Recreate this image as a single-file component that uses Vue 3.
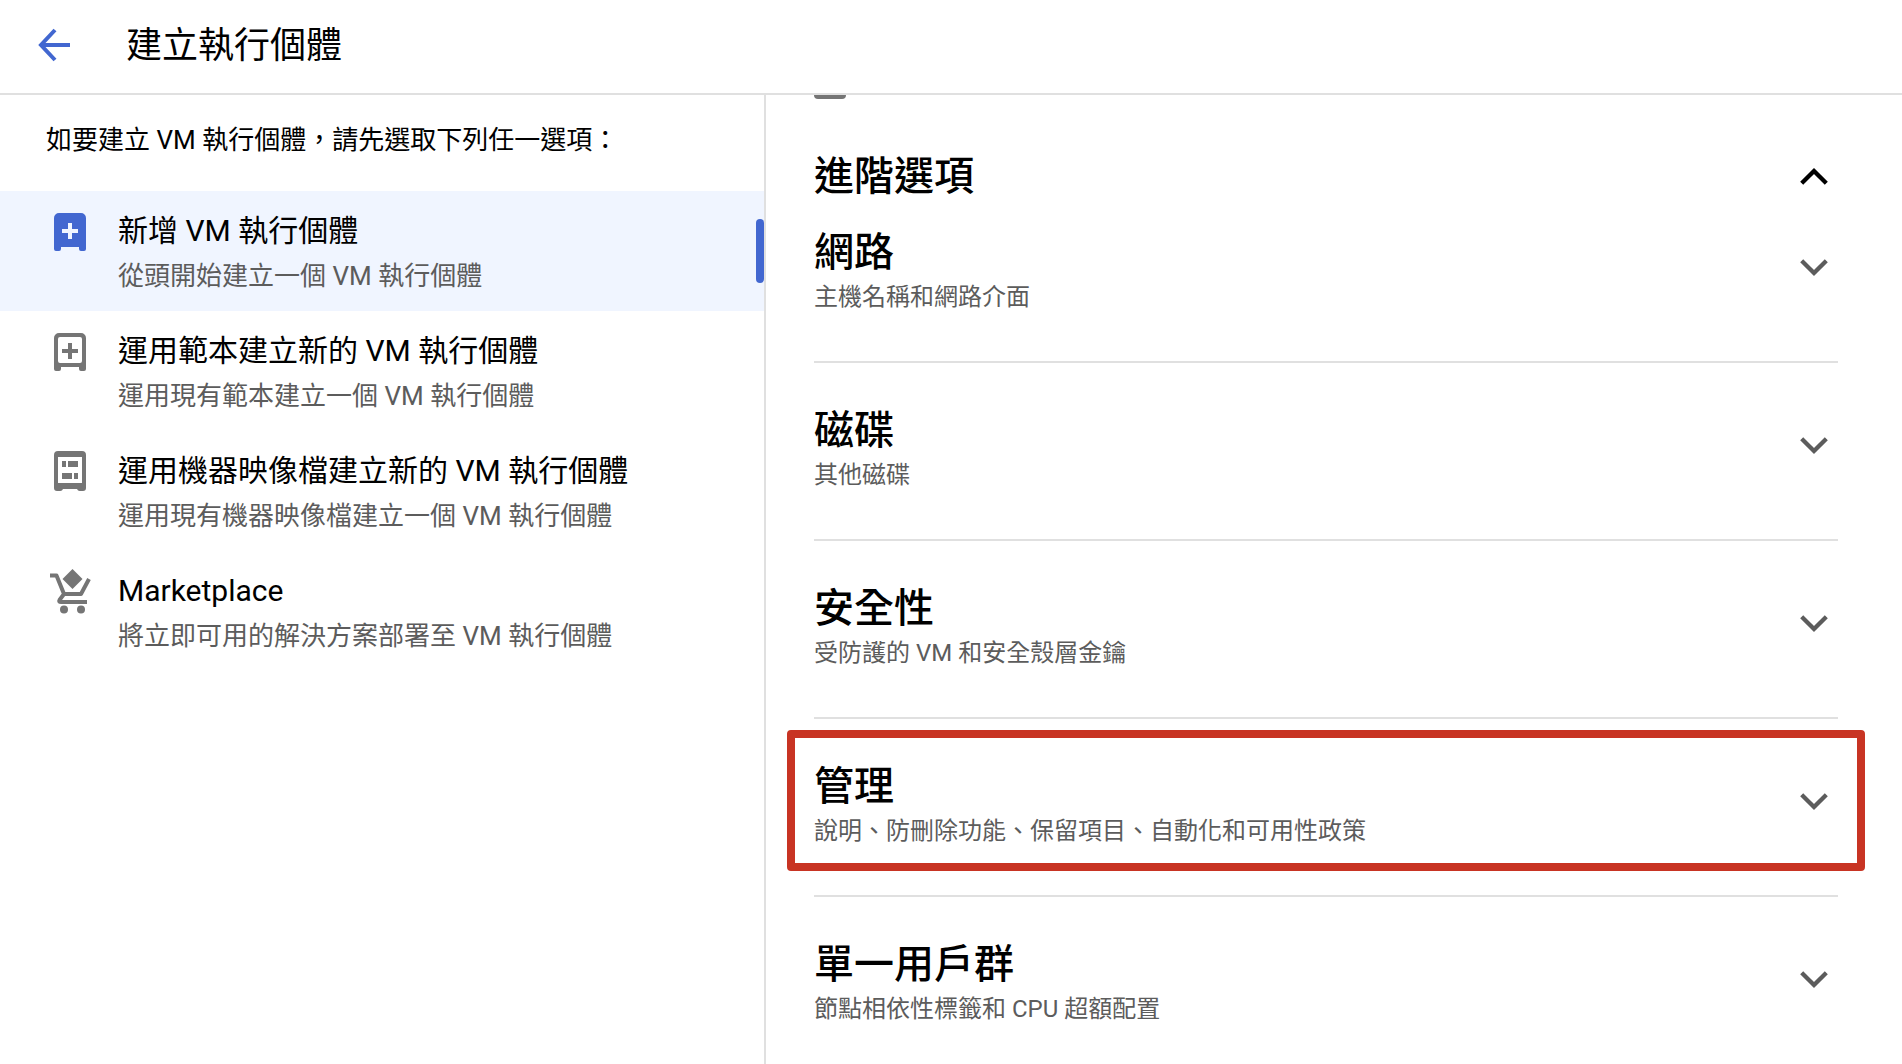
<script setup>
import { ref } from 'vue'

const options = [
  { id: 'new', title: '新增 VM 執行個體', hint: '從頭開始建立一個 VM 執行個體' },
  { id: 'template', title: '運用範本建立新的 VM 執行個體', hint: '運用現有範本建立一個 VM 執行個體' },
  { id: 'image', title: '運用機器映像檔建立新的 VM 執行個體', hint: '運用現有機器映像檔建立一個 VM 執行個體' },
  { id: 'market', title: 'Marketplace', hint: '將立即可用的解決方案部署至 VM 執行個體' },
]
const selected = ref('new')

const sections = [
  { title: '網路', hint: '主機名稱和網路介面' },
  { title: '磁碟', hint: '其他磁碟' },
  { title: '安全性', hint: '受防護的 VM 和安全殼層金鑰' },
  { title: '管理', hint: '說明、防刪除功能、保留項目、自動化和可用性政策', marked: true },
  { title: '單一用戶群', hint: '節點相依性標籤和 CPU 超額配置' },
]
</script>

<template>
  <div class="page">
    <header class="topbar">
      <button class="back" type="button" aria-label="返回">
        <svg width="32" height="34" viewBox="0 0 32 34" fill="none" stroke="currentColor" stroke-width="4">
          <path d="M32 17H4M17 2L3 17l14 15" />
        </svg>
      </button>
      <h1>建立執行個體</h1>
    </header>

    <div class="columns">
      <nav class="sidebar">
        <p class="intro">如要建立 VM 執行個體，請先選取下列任一選項：</p>
        <a
          v-for="o in options"
          :key="o.id"
          href="#"
          class="option"
          :class="{ active: selected === o.id }"
          @click.prevent="selected = o.id"
        >
          <span class="icon">
            <svg v-if="o.id === 'new'" width="32" height="38" viewBox="0 0 32 38" fill="currentColor">
              <path fill-rule="evenodd" d="M5 0h22a5 5 0 0 1 5 5v31a2 2 0 0 1-2 2h-3a2 2 0 0 1-2-2v-2H7v2a2 2 0 0 1-2 2H2a2 2 0 0 1-2-2V5a5 5 0 0 1 5-5zM14 10v6H8v4h6v6h4v-6h6v-4h-6v-6z" />
            </svg>
            <svg v-else-if="o.id === 'template'" width="32" height="38" viewBox="0 0 32 38" fill="currentColor">
              <path fill-rule="evenodd" d="M5 0h22a5 5 0 0 1 5 5v31a2 2 0 0 1-2 2h-3a2 2 0 0 1-2-2v-2H7v2a2 2 0 0 1-2 2H2a2 2 0 0 1-2-2V5a5 5 0 0 1 5-5zM6 4a2 2 0 0 0-2 2v22a2 2 0 0 0 2 2h20a2 2 0 0 0 2-2V6a2 2 0 0 0-2-2z" />
              <path d="M14 10h4v6h6v4h-6v6h-4v-6H8v-4h6z" />
            </svg>
            <svg v-else-if="o.id === 'image'" width="32" height="42" viewBox="0 0 32 42" fill="currentColor">
              <path fill-rule="evenodd" d="M4 0h24a4 4 0 0 1 4 4v33a3 3 0 0 1-3 3h-3a3 3 0 0 1-3-2H9a3 3 0 0 1-3 2H3a3 3 0 0 1-3-3V4a4 4 0 0 1 4-4zM4 6v26h24V6z" />
              <path d="M8 10h4v6H8zM14 10h10v6H14zM8 22h10v6H8zM20 22h4v6h-4z" />
            </svg>
            <svg v-else width="42" height="46" viewBox="0 0 42 46" fill="none" stroke="currentColor" stroke-width="4">
              <path d="M1 6.500h6.500l7.500 18.500h17l8-15M15 25l-4.500 6c-1 1.500 0 2 1.500 2h26" stroke-linejoin="round" />
              <path d="M23.500 0l10 10-10 10-10-10z" fill="currentColor" stroke="none" />
              <circle cx="15" cy="40.500" r="4" fill="currentColor" stroke="none" />
              <circle cx="32" cy="40.500" r="4" fill="currentColor" stroke="none" />
            </svg>
          </span>
          <span class="label">
            <span class="name">{{ o.title }}</span>
            <span class="hint">{{ o.hint }}</span>
          </span>
        </a>
      </nav>

      <main class="content">
        <div class="box-end"></div>
        <div class="group">
          <h2>進階選項</h2>
          <button class="toggle open" type="button" aria-label="收合進階選項">
            <svg width="48" height="48" viewBox="0 0 48 48" fill="none" stroke="currentColor" stroke-width="4.300">
              <path d="M11.700 30.300l12.300-12.300 12.300 12.300" />
            </svg>
          </button>
        </div>
        <section v-for="s in sections" :key="s.title" class="section" :class="{ marked: s.marked }">
          <div>
            <h2>{{ s.title }}</h2>
            <p>{{ s.hint }}</p>
          </div>
          <button class="toggle" type="button" :aria-label="'展開' + s.title">
            <svg width="48" height="48" viewBox="0 0 48 48" fill="none" stroke="currentColor" stroke-width="4.300">
              <path d="M11.700 17.700l12.300 12.300 12.300-12.300" />
            </svg>
          </button>
        </section>
      </main>
    </div>
  </div>
</template>

<style>
body {
  margin: 0;
  background: #fff;
}
</style>

<style scoped>
.page {
  display: flex;
  flex-direction: column;
  height: 100vh;
  color: #000;
  font-family: Roboto, "Noto Sans CJK TC", sans-serif;
}
button {
  display: flex;
  padding: 0;
  border: 0;
  background: none;
  cursor: pointer;
}
svg {
  display: block;
}
h1,
h2,
p {
  margin: 0;
}
.topbar {
  display: flex;
  align-items: center;
  gap: 56px;
  padding: 20px 38px 23px;
  border-bottom: 2px solid #e0e0e0;
}
.back {
  color: #4267d0;
}
h1 {
  padding-top: 2px;
  font-size: 36px;
  line-height: 48px;
  font-weight: 400;
}
.columns {
  display: grid;
  grid-template-columns: minmax(0, 383fr) minmax(0, 568fr);
  flex: 1;
  min-height: 0;
}
.sidebar {
  border-right: 2px solid #e0e0e0;
}
.intro {
  padding: 25px 46px 31px;
  font-size: 26px;
  line-height: 40px;
}
.option {
  position: relative;
  display: flex;
  gap: 26px;
  padding: 18px 48px 12px;
  color: inherit;
  text-decoration: none;
}
.option.active {
  background: #f0f5ff;
}
.option.active::after {
  content: "";
  position: absolute;
  top: 28px;
  right: 0;
  width: 8px;
  height: 64px;
  border-radius: 4px;
  background: #4267d0;
}
.icon {
  display: flex;
  align-items: center;
  justify-content: center;
  width: 44px;
  height: 46px;
  color: #757575;
}
.active .icon {
  color: #4267d0;
}
.label {
  display: flex;
  flex-direction: column;
}
.name {
  font-size: 30px;
  line-height: 44px;
}
.hint {
  font-size: 26px;
  line-height: 46px;
  color: #5c5c5c;
}
.content {
  padding: 0 64px 0 48px;
  overflow-y: auto;
  scrollbar-width: none;
}
.box-end {
  width: 32px;
  height: 4px;
  border-radius: 0 0 4px 4px;
  background: #757575;
}
.group {
  display: flex;
  justify-content: space-between;
  padding-top: 54px;
}
h2 {
  font-size: 40px;
  line-height: 48px;
  font-weight: 500;
}
.section {
  position: relative;
  display: flex;
  justify-content: space-between;
  padding: 44px 0;
  border-bottom: 2px solid #e0e0e0;
}
.group + .section {
  padding-top: 28px;
}
.section p {
  font-size: 24px;
  line-height: 40px;
  color: #5c5c5c;
}
.toggle {
  align-self: flex-start;
  color: #5c5c5c;
}
.toggle.open {
  color: #000;
}
.section .toggle {
  margin-top: 14px;
}
.marked::after {
  content: "";
  position: absolute;
  inset: 11px -27px 24px;
  border: 8px solid #c83423;
  border-radius: 4px;
  pointer-events: none;
}
</style>
